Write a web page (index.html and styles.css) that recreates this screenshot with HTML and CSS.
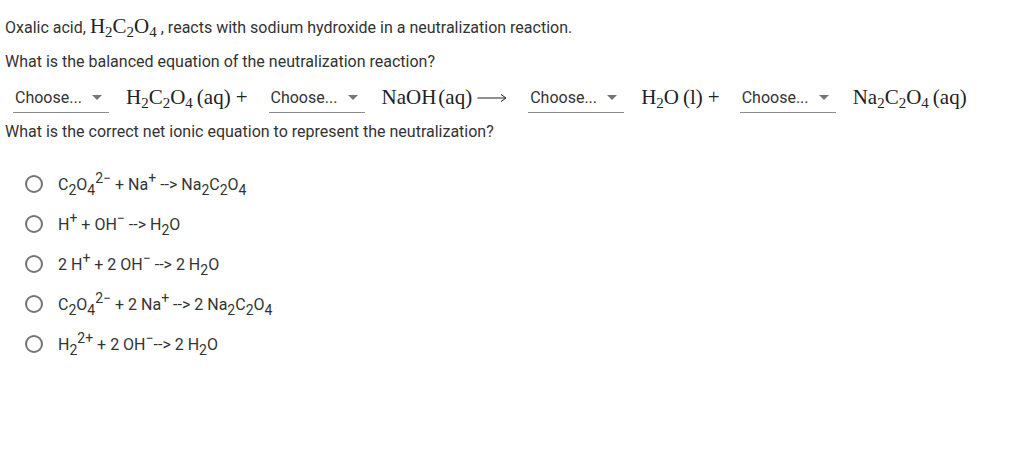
FILE: index.html
```html
<!DOCTYPE html>
<html>
<head>
<meta charset="utf-8">
<link rel="stylesheet" href="styles.css">
</head>
<body>
<div class="page">
  <p class="line l1">Oxalic acid, <span class="math inl">H<sub>2</sub>C<sub>2</sub>O<sub>4</sub></span>, reacts with sodium hydroxide in a neutralization reaction.</p>
  <p class="line l2">What is the balanced equation of the neutralization reaction?</p>
  <div class="eq">
    <div class="select"><span>Choose...</span><span class="caret"></span></div>
    <span class="math m1">H<sub>2</sub>C<sub>2</sub>O<sub>4</sub><span class="sp">(aq)</span><span class="op">+</span></span>
    <div class="select"><span>Choose...</span><span class="caret"></span></div>
    <span class="math m2">NaOH<span class="sp2">(aq)</span><svg class="arrow" width="30" height="10" viewBox="0 0 30 10"><path d="M0.5 5H28.5M24 1.5L29 5L24 8.5" fill="none" stroke="#222" stroke-width="1"/></svg></span>
    <div class="select"><span>Choose...</span><span class="caret"></span></div>
    <span class="math m3">H<sub>2</sub>O<span class="sp">(l)</span><span class="op">+</span></span>
    <div class="select"><span>Choose...</span><span class="caret"></span></div>
    <span class="math m4">Na<sub>2</sub>C<sub>2</sub>O<sub>4</sub><span class="sp">(aq)</span></span>
  </div>
  <p class="line l3">What is the correct net ionic equation to represent the neutralization?</p>
  <ul class="options">
    <li><span class="radio"></span><span>C<sub>2</sub>O<sub>4</sub><sup>2−</sup> + Na<sup>+</sup> --&gt; Na<sub>2</sub>C<sub>2</sub>O<sub>4</sub></span></li>
    <li><span class="radio"></span><span>H<sup>+</sup> + OH<sup>−</sup> --&gt; H<sub>2</sub>O</span></li>
    <li><span class="radio"></span><span>2 H<sup>+</sup> + 2 OH<sup>−</sup> --&gt; 2 H<sub>2</sub>O</span></li>
    <li><span class="radio"></span><span>C<sub>2</sub>O<sub>4</sub><sup>2−</sup> + 2 Na<sup>+</sup> --&gt; 2 Na<sub>2</sub>C<sub>2</sub>O<sub>4</sub></span></li>
    <li><span class="radio"></span><span>H<sub>2</sub><sup>2+</sup> + 2 OH<sup>−</sup>--&gt; 2 H<sub>2</sub>O</span></li>
  </ul>
</div>
</body>
</html>
```
FILE: styles.css
```css
html, body { margin: 0; padding: 0; background: #fff; }
body { font-family: Roboto, "Liberation Sans", sans-serif; font-size: 16px; color: #333; }
.page { padding: 0 5px; }
.line { margin: 0; line-height: 20px; }
.l1 { padding-top: 16px; }
.l2 { margin-top: 14px; }
.math { font-family: "Liberation Serif", "DejaVu Serif", serif; font-size: 21px; color: #222; white-space: nowrap; }
.inl { font-size: 21px; margin-right: 4px; }
.math sub { font-size: 15px; vertical-align: -4px; line-height: 0; }
.sp { margin-left: 4px; }
.sp2 { margin-left: 2px; }
.op { margin-left: 5px; }
.arrow { margin-left: 5px; vertical-align: 1px; }
.eq { display: flex; align-items: center; margin-top: 10px; height: 31px; }
.select { display: flex; align-items: center; justify-content: space-between; box-sizing: border-box; flex: none; width: 96px; height: 31px; padding: 0 7px 0 2px; border-bottom: 1px solid #8a8a8a; margin-right: 17px; color: #333; font-size: 16px; }
.select:first-child { margin-left: 8px; }
.m1 { margin-right: 21px; }
.m3 { margin-right: 20px; }
.m2 { margin-right: 21px; }
.caret { width: 0; height: 0; border-left: 5px solid transparent; border-right: 5px solid transparent; border-top: 5px solid #757575; }
.l3 { margin-top: 9px; }
.options { list-style: none; margin: 22px 0 0; padding: 0 0 0 20px; }
.options li { display: flex; align-items: center; height: 40px; }
.radio { width: 18px; height: 18px; box-sizing: border-box; border: 2px solid #757575; border-radius: 50%; margin-right: 15px; flex: none; }
.options sub, .options sup { font-size: 14px; line-height: 0; }
.options sub { vertical-align: -5px; }
.options sup { vertical-align: 7px; }
```
